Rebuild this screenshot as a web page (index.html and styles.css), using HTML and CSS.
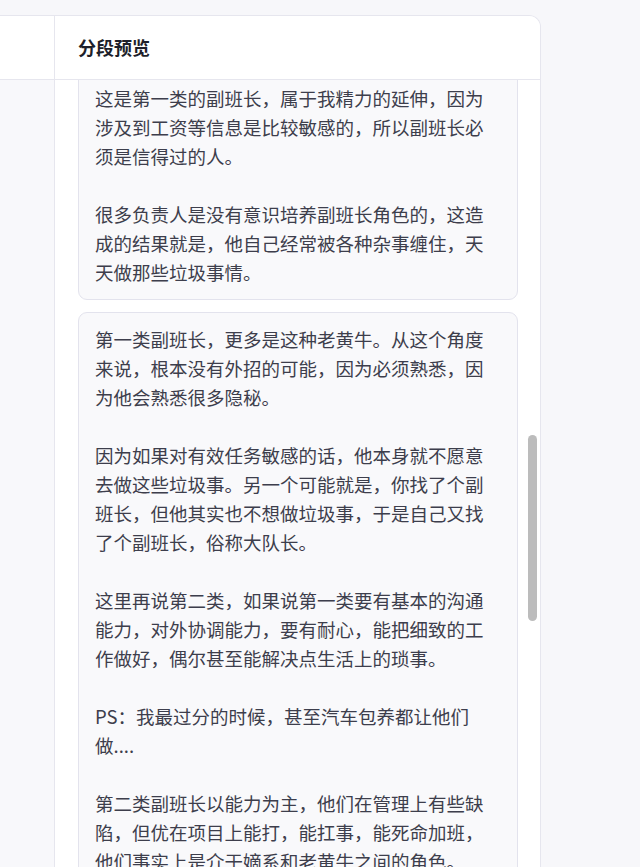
FILE: index.html
```html
<!DOCTYPE html>
<html lang="zh-CN">

<head>
    <meta charset="UTF-8">
    <meta name="viewport" content="width=device-width, initial-scale=1.0">
    <title>分段预览</title>
    <link rel="stylesheet" href="styles.css">
</head>

<body>
    <div class="shell">
        <div class="side">
            <div class="side-head"></div>
            <div class="side-body"></div>
        </div>

        <div class="preview">
            <div class="preview-head">分段预览</div>
            <div class="preview-body">
                <div class="chunks">
                    <div class="chunk">
                        <p>所以我会把一些事务性的工作交给他们去处理，比如排班、考勤。</p>
                        <p>这是第一类的副班长，属于我精力的延伸，因为涉及到工资等信息是比较敏感的，所以副班长必须是信得过的人。</p>
                        <p>很多负责人是没有意识培养副班长角色的，这造成的结果就是，他自己经常被各种杂事缠住，天天做那些垃圾事情。</p>
                    </div>
                    <div class="chunk">
                        <p>第一类副班长，更多是这种老黄牛。从这个角度来说，根本没有外招的可能，因为必须熟悉，因为他会熟悉很多隐秘。</p>
                        <p>因为如果对有效任务敏感的话，他本身就不愿意去做这些垃圾事。另一个可能就是，你找了个副班长，但他其实也不想做垃圾事，于是自己又找了个副班长，俗称大队长。</p>
                        <p>这里再说第二类，如果说第一类要有基本的沟通能力，对外协调能力，要有耐心，能把细致的工作做好，偶尔甚至能解决点生活上的琐事。</p>
                        <p>PS：我最过分的时候，甚至汽车包养都让他们做....</p>
                        <p>第二类副班长以能力为主，他们在管理上有些缺陷，但优在项目上能打，能扛事，能死命加班，他们事实上是介于嫡系和老黄牛之间的角色。</p>
                    </div>
                </div>
            </div>
            <div class="thumb"></div>
        </div>
    </div>
</body>

</html>
```

FILE: styles.css
```css
* {
    margin: 0;
    padding: 0;
    box-sizing: border-box;
}

body {
    background-color: #f7f7fa;
    font-family: "Noto Sans CJK SC", "Noto Sans", sans-serif;
    height: 100vh;
    overflow: hidden;
}

.shell {
    display: flex;
    width: 541px;
    height: 900px;
    margin-top: 15px;
    border: 1px solid #e6e6ee;
    border-left: none;
    border-top-right-radius: 12px;
    overflow: hidden;
}

.side {
    width: 55px;
    display: flex;
    flex-direction: column;
    border-right: 1px solid #e6e6ee;
}

.side-head {
    height: 64px;
    background-color: #fff;
    border-bottom: 1px solid #e6e6ee;
}

.side-body {
    flex: 1;
    background-color: #f8f8fb;
}

.preview {
    position: relative;
    flex: 1;
    display: flex;
    flex-direction: column;
    background-color: #fff;
}

.preview-head {
    height: 64px;
    display: flex;
    align-items: center;
    padding-left: 23px;
    padding-bottom: 1px;
    font-size: 18px;
    font-weight: 600;
    color: #1e1f2a;
    border-bottom: 1px solid #e6e6ee;
}

.preview-body {
    flex: 1;
    overflow: hidden;
    padding: 0 22px 0 23px;
}

.chunks {
    display: flex;
    flex-direction: column;
    gap: 12px;
    margin-top: -96px;
}

.chunk {
    background-color: #f9f9fb;
    border: 1px solid #e3e3ed;
    border-radius: 9px;
    padding: 12px 24px 12px 16px;
    font-size: 18.5px;
    line-height: 29px;
    color: #3d3e4c;
}

.chunk p + p {
    margin-top: 29px;
}

/* fake scroll thumb */
.thumb {
    position: absolute;
    top: 419px;
    right: 3px;
    width: 9px;
    height: 186px;
    border-radius: 5px;
    background-color: #bcbcbc;
}
```
